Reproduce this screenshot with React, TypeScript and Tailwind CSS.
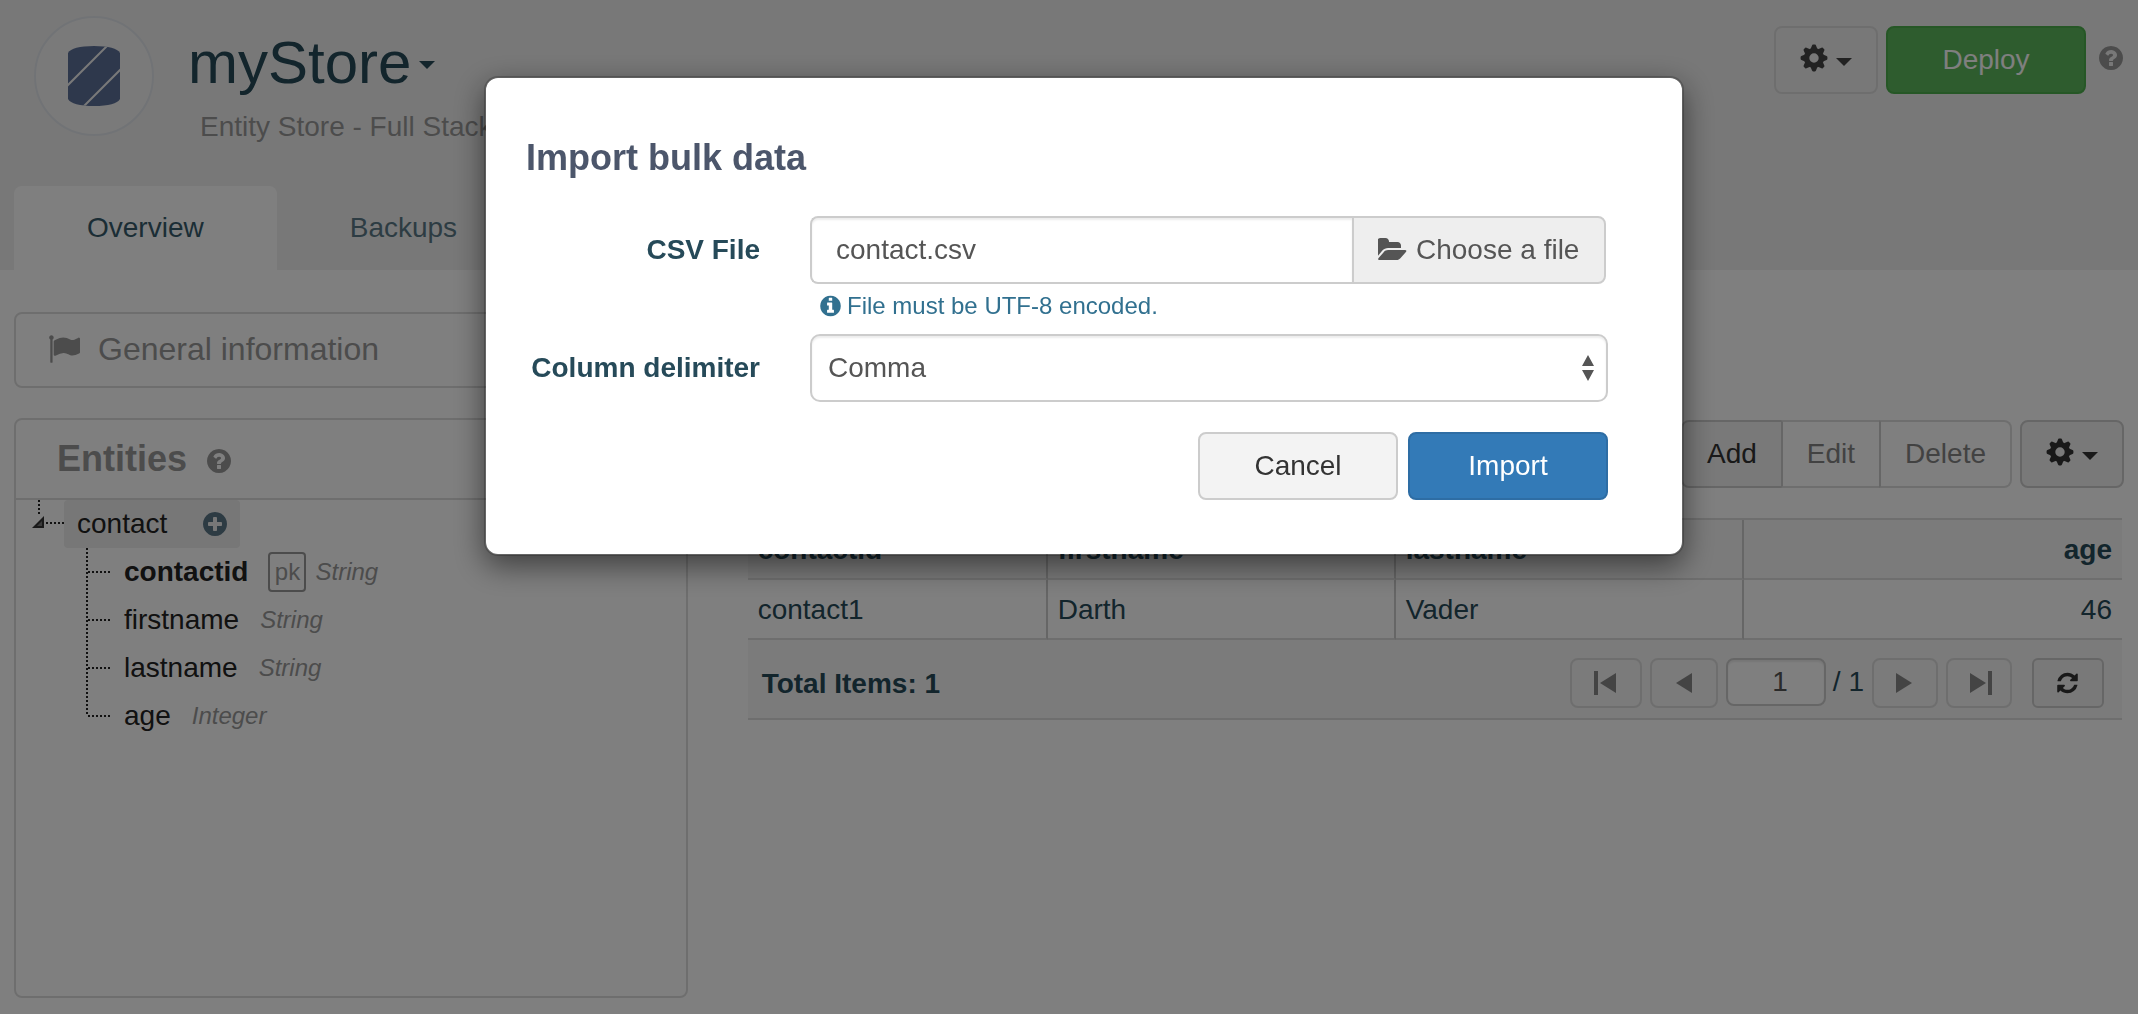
import React from "react";

const RING =
  "q0 209-103 385.5t-279.5 279.5-385.5 103-385.5-103-279.5-279.5-103-385.5 103-385.5 279.5-279.5 385.5-103 385.5 103 279.5 279.5 103 385.5z";

const ICONS = {
  refresh: {
    box: "128 0 1536 1792",
    d: "M1639 1056q0 5-1 7-64 268-268 434.5t-478 166.5q-146 0-282.5-55t-243.5-157l-129 129q-19 19-45 19t-45-19-19-45v-448q0-26 19-45t45-19h448q26 0 45 19t19 45-19 45l-137 137q71 66 161 102t187 36q134 0 250-65t186-179q11-17 53-117 8-23 30-23h192q13 0 22.5 9.5t9.5 22.5zm25-800v448q0 26-19 45t-45 19h-448q-26 0-45-19t-19-45 19-45l138-138q-148-137-349-137-134 0-250 65t-186 179q-11 17-53 117-8 23-30 23h-199q-13 0-22.5-9.5t-9.5-22.5v-7q65-268 270-434.5t480-166.5q146 0 284 55.5t245 156.5l130-129q19-19 45-19t45 19 19 45z",
  },
  question: {
    box: "128 0 1536 1792",
    d:
      "M1024 1376v-192q0-14-9-23t-23-9h-192q-14 0-23 9t-9 23v192q0 14 9 23t23 9h192q14 0 23-9t9-23zm256-672q0-88-55.5-163t-138.5-116-170-41q-243 0-371 213-15 24 8 42l132 100q7 6 19 6 16 0 25-12 53-68 86-92 34-24 86-24 48 0 85.5 26t37.5 59q0 38-20 61t-68 45q-63 28-115.5 86.5t-52.5 125.5v36q0 14 9 23t23 9h192q14 0 23-9t9-23q0-19 21.5-49.5t54.5-49.5q32-18 49-28.5t46-35 44.5-48 28-60.5 12.5-81zm384 192" +
      RING,
  },
  info: {
    box: "128 0 1536 1792",
    d:
      "M1152 1376v-160q0-14-9-23t-23-9h-96v-512q0-14-9-23t-23-9h-320q-14 0-23 9t-9 23v160q0 14 9 23t23 9h96v320h-96q-14 0-23 9t-9 23v160q0 14 9 23t23 9h448q14 0 23-9t9-23zm-128-896v-160q0-14-9-23t-23-9h-192q-14 0-23 9t-9 23v160q0 14 9 23t23 9h192q14 0 23-9t9-23zm640 416" +
      RING,
  },
  plus: {
    box: "128 0 1536 1792",
    d:
      "M1344 960v-128q0-26-19-45t-45-19h-256v-256q0-26-19-45t-45-19h-128q-26 0-45 19t-19 45v256h-256q-26 0-45 19t-19 45v128q0 26 19 45t45 19h256v256q0 26 19 45t45 19h128q26 0 45-19t19-45v-256h256q26 0 45-19t19-45zm320-64" +
      RING,
  },
  flag: {
    box: "0 0 1792 1792",
    d: "M320 256q0 72-64 110v1266q0 13-9.5 22.5t-22.5 9.5h-64q-13 0-22.5-9.5t-9.5-22.5v-1266q-64-38-64-110 0-53 37.5-90.5t90.5-37.5 90.5 37.5 37.5 90.5zm1472 64v763q0 25-12.5 38.5t-39.5 27.5q-215 116-369 116-61 0-123.5-22t-108.5-48-115.5-48-142.5-22q-192 0-464 146-17 9-33 9-26 0-45-19t-19-45v-742q0-32 31-55 21-14 79-43 236-120 421-120 107 0 200 29t219 88q38 19 88 19 54 0 117.5-21t110-47 88-47 54.5-21q26 0 45 19t19 45z",
  },
  folder: {
    box: "0 0 1856 1792",
    d: "M1815 952q0 31-31 66l-336 396q-43 51-120.5 86.5t-143.5 35.5h-1088q-34 0-60.5-13t-26.5-43q0-31 31-66l336-396q43-51 120.5-86.5t143.5-35.5h1088q34 0 60.5 13t26.5 43zm-343-344v160h-832q-94 0-197 47.5t-164 119.5l-337 396-5 6q0-4-.5-12.5t-.5-12.5v-960q0-92 66-158t158-66h320q92 0 158 66t66 158v32h544q92 0 158 66t66 158z",
  },
};

function Icon({ name, className }: { name: keyof typeof ICONS; className: string }) {
  return (
    <svg viewBox={ICONS[name].box} className={"shrink-0 fill-current " + className} aria-hidden="true">
      <path d={ICONS[name].d} />
    </svg>
  );
}

function Gear() {
  return (
    <svg viewBox="-14 -14 28 28" className="mb-1 size-7 shrink-0" aria-hidden="true">
      <circle r="7.4" fill="none" stroke="currentColor" strokeWidth="5.4" />
      {[0, 45, 90, 135, 180, 225, 270, 315].map((a) => (
        <path
          key={a}
          transform={`rotate(${a})`}
          d="M-3.4-9L-2-12.6Q-1.7-13.4-1-13.4H1Q1.7-13.4 2-12.6L3.4-9z"
          fill="currentColor"
        />
      ))}
    </svg>
  );
}

function Caret() {
  return (
    <svg viewBox="0 0 16 8" className="mt-1 h-2 w-4 shrink-0 fill-current" aria-hidden="true">
      <path d="M0 0h16L8 8z" />
    </svg>
  );
}

function StoreLogo() {
  return (
    <svg viewBox="0 0 120 120" className="size-[120px] shrink-0" aria-hidden="true">
      <circle cx="60" cy="60" r="59" fill="#f5f5f5" stroke="#e3e7ec" strokeWidth="2" />
      <clipPath id="drum">
        <path d="M34 37Q38 30 60 30T86 37V83Q82 90 60 90T34 83z" />
      </clipPath>
      <g clipPath="url(#drum)">
        <rect x="30" y="26" width="60" height="68" fill="#5d7199" />
        <path d="M28 75L77 26M44 96L92 48" stroke="#f2f2f2" strokeWidth="2" />
      </g>
    </svg>
  );
}

function Header() {
  return (
    <header className="flex flex-col bg-[#f1f1f1]">
      <div className="flex h-[186px] items-start pt-4 pl-[34px]">
        <StoreLogo />
        <div className="flex flex-col pl-[34px]">
          <button className="mt-[15px] flex items-center gap-2 text-[60px] leading-[64px] text-[#264a59]">
            <span>myStore</span>
            <Caret />
          </button>
          <p className="mt-3 ml-3 leading-10 text-[#999]">Entity Store - Full Stack</p>
        </div>
        <div className="ml-auto flex items-center pt-[10px] pr-[15px]">
          <button
            aria-label="Store settings"
            className="mr-2 flex h-[68px] w-[104px] items-center gap-2 rounded-lg border-2 border-[#ddd] px-6 text-[#444]"
          >
            <Gear />
            <Caret />
          </button>
          <button className="h-[68px] w-[200px] rounded-lg border-2 border-[#4cae4c] bg-[#5cb85c] text-white">Deploy</button>
          <a href="#help" aria-label="Help" className="ml-[13px] pb-1 text-[#999]">
            <Icon name="question" className="h-7 w-6" />
          </a>
        </div>
      </div>
      <nav className="flex h-[84px] gap-0.5 pl-[14px]">
        <a href="#overview" className="flex items-center rounded-t-lg bg-white px-[73px] text-[#365b6b]">
          Overview
        </a>
        <a href="#backups" className="flex items-center rounded-t-lg px-[71px] text-[#5b7986]">
          Backups
        </a>
      </nav>
    </header>
  );
}

const DOTS_Y = "bg-[repeating-linear-gradient(to_bottom,#222_0px,#222_2px,transparent_2px,transparent_4px)]";
const DOTS_X = "bg-[repeating-linear-gradient(to_right,#222_0px,#222_2px,transparent_2px,transparent_4px)]";

const FIELDS = [
  { name: "contactid", type: "String", pk: true },
  { name: "firstname", type: "String", pk: false },
  { name: "lastname", type: "String", pk: false },
  { name: "age", type: "Integer", pk: false },
];

function EntitiesPanel() {
  return (
    <section className="h-[580px] rounded-lg border-2 border-[#ddd]">
      <h2 className="flex h-[80px] items-center gap-5 border-b-2 border-[#ddd] pl-[41px] text-[36px] leading-10 font-bold text-[#999]">
        Entities
        <a href="#entities-help" aria-label="About entities" className="pt-1">
          <Icon name="question" className="h-7 w-6" />
        </a>
      </h2>
      <div className="flex h-12 pl-4">
        <div className="flex w-8 flex-col">
          <span className={"ml-1.5 h-4 w-0.5 " + DOTS_Y} />
          <span className="flex items-center gap-0.5">
            <svg viewBox="0 0 12 12" className="size-3" aria-hidden="true">
              <path d="M12 0v12H0z" fill="#333" />
              <path d="M10 5v5H5z" fill="#777" />
            </svg>
            <span className={"mt-0.5 h-0.5 flex-1 " + DOTS_X} />
          </span>
        </div>
        <div className="flex w-44 items-center justify-between rounded bg-[#eee] pr-[13px] pl-[13px] text-[#222]">
          contact
          <button aria-label="Add field" className="text-[#5a7687]">
            <Icon name="plus" className="h-7 w-6" />
          </button>
        </div>
      </div>
      <ul className="pl-[70px]">
        {FIELDS.map((f, i) => (
          <li key={f.name} className="flex h-12 items-center text-[#222]">
            <span className="flex h-12 w-[38px] items-center">
              <span className={"w-0.5 " + (i === FIELDS.length - 1 ? "h-6 self-start " : "h-12 ") + DOTS_Y} />
              <span className={"h-0.5 w-6 " + DOTS_X} />
            </span>
            <span className={f.pk ? "font-bold" : ""}>{f.name}</span>
            {f.pk && (
              <span className="mr-[-12px] ml-5 flex h-10 w-[38px] items-center justify-center rounded border-2 border-[#999] text-[24px] text-[#999]">
                pk
              </span>
            )}
            <em className="ml-[21px] text-[24px] text-[#999]">{f.type}</em>
          </li>
        ))}
      </ul>
    </section>
  );
}

function Toolbar() {
  return (
    <div className="flex h-[68px] justify-end gap-2">
      <div className="flex">
        <button className="rounded-l-lg border-2 border-[#ccc] bg-[#f3f3f3] px-6 text-[#333]">Add</button>
        <button disabled className="-ml-0.5 border-2 border-x-[#ccc] border-y-[#ddd] px-6 text-[#858585]">
          Edit
        </button>
        <button disabled className="-ml-0.5 rounded-r-lg border-2 border-[#ddd] border-l-[#ccc] px-6 text-[#858585]">
          Delete
        </button>
      </div>
      <button
        aria-label="Table settings"
        className="flex w-[104px] items-center gap-2 rounded-lg border-2 border-[#ccc] bg-[#f3f3f3] px-6 text-[#333]"
      >
        <Gear />
        <Caret />
      </button>
    </div>
  );
}

function PageArrow({ label, d, view, className }: { label: string; d: string; view: string; className: string }) {
  return (
    <button aria-label={label} disabled className={"flex h-[50px] items-center rounded-lg border-2 border-[#ddd] text-[#888] " + className}>
      <svg viewBox={view} className="h-6 fill-current" aria-hidden="true">
        <path d={d} />
      </svg>
    </button>
  );
}

function Pager() {
  return (
    <div className="flex items-start border-b-2 border-[#ddd] bg-[#f6f6f6] pt-[18px] pr-[18px] pb-[10px] pl-[14px] text-[#264a59]">
      <strong className="mt-1.5 mr-auto leading-10">Total Items: 1</strong>
      <div className="flex items-start gap-2">
        <PageArrow label="First page" view="0 0 22 24" d="M0 0h4v24H0zM22 2v20L6 12z" className="w-[72px] pl-[22px]" />
        <PageArrow label="Previous page" view="0 0 16 24" d="M16 2v20L0 12z" className="w-[68px] pl-6" />
        <input
          aria-label="Page"
          defaultValue="1"
          className="h-12 w-[100px] rounded-lg border-2 border-[#ccc] bg-white pr-9 text-right text-[#555] shadow-[inset_0_2px_2px_rgba(0,0,0,0.08)]"
        />
      </div>
      <span className="mt-1 mr-2 ml-[7px] leading-10">/ 1</span>
      <div className="flex items-start gap-2">
        <PageArrow label="Next page" view="0 0 16 24" d="M0 2v20L16 12z" className="w-[66px] pl-[22px]" />
        <PageArrow label="Last page" view="0 0 22 24" d="M0 2v20L16 12zM18 0h4v24h-4z" className="w-[66px] pl-[22px]" />
      </div>
      <button
        aria-label="Refresh"
        className="ml-5 flex h-[50px] w-[72px] items-center justify-center rounded-md border-2 border-[#ccc] bg-[#f3f3f3] text-[#333]"
      >
        <Icon name="refresh" className="h-6 w-[21px]" />
      </button>
    </div>
  );
}

const COLUMNS = ["contactid", "firstname", "lastname", "age"];
const ROW = ["contact1", "Darth", "Vader", "46"];
const COL_WIDTHS = ["w-[300px]", "w-[348px]", "w-[348px]", ""];

function DataTable() {
  return (
    <div className="mt-[30px] mr-0.5">
      <table className="w-full table-fixed border-separate border-spacing-0 border-t-2 border-[#ddd] leading-10 text-[#264a59]">
        <thead>
          <tr>
            {COLUMNS.map((c, i) => (
              <th
                key={c}
                scope="col"
                className={
                  "h-[60px] border-b-2 border-b-[#ddd] bg-[#f6f6f6] px-[10px] pt-0.5 font-bold " +
                  COL_WIDTHS[i] +
                  (i === 3 ? " text-right" : " border-r-2 border-r-[#ccc] text-left")
                }
              >
                {c}
              </th>
            ))}
          </tr>
        </thead>
        <tbody>
          <tr>
            {ROW.map((c, i) => (
              <td
                key={c}
                className={
                  "h-[60px] border-b-2 border-b-[#ddd] px-[10px] pt-0.5 " +
                  (i === 3 ? "text-right" : "border-r-2 border-r-[#ccc] text-left")
                }
              >
                {c}
              </td>
            ))}
          </tr>
        </tbody>
      </table>
      <Pager />
    </div>
  );
}

function ImportDialog() {
  return (
    <div className="fixed inset-0 overflow-hidden bg-black/50 pt-[76px] pl-[30px]">
      <form
        role="dialog"
        aria-labelledby="import-title"
        className="mx-auto w-full max-w-[1200px] rounded-[14px] border-2 border-black/20 bg-white bg-clip-padding pt-[60px] pr-[74px] pb-[54px] pl-10 shadow-[0_10px_30px_rgba(0,0,0,0.5)]"
        onSubmit={(e: React.FormEvent) => e.preventDefault()}
      >
        <h1 id="import-title" className="text-[36px] leading-10 font-bold text-[#4c566b]">
          Import bulk data
        </h1>
        <div className="mt-[38px] grid grid-cols-[234px_1fr] gap-x-[50px]">
          <label htmlFor="csv" className="text-right leading-[68px] font-bold text-[#264a59]">
            CSV File
          </label>
          <div className="mr-0.5 flex h-[68px] text-[#555]">
            <input
              id="csv"
              readOnly
              defaultValue="contact.csv"
              className="min-w-0 flex-1 rounded-l-lg border-2 border-r-0 border-[#ccc] bg-white px-6 shadow-[inset_0_2px_2px_rgba(0,0,0,0.075)]"
            />
            <button type="button" className="flex w-[254px] items-center gap-[9px] rounded-r-lg border-2 border-[#ccc] bg-[#eee] pl-6">
              <Icon name="folder" className="h-7 w-[29px]" />
              Choose a file
            </button>
          </div>
          <p className="col-start-2 flex h-[50px] items-center gap-1.5 pb-[7px] pl-2.5 text-[24px] text-[#31708f]">
            <Icon name="info" className="h-6 w-[21px]" />
            File must be UTF-8 encoded.
          </p>
          <label htmlFor="delimiter" className="text-right leading-[68px] font-bold text-[#264a59]">
            Column delimiter
          </label>
          <div className="relative">
            <select
              id="delimiter"
              defaultValue="Comma"
              className="h-[68px] w-full appearance-none rounded-[10px] border-2 border-[#ccc] bg-white px-4 text-[#555] shadow-[inset_0_2px_2px_rgba(0,0,0,0.075)]"
            >
              <option>Comma</option>
              <option>Semicolon</option>
              <option>Tab</option>
            </select>
            <svg viewBox="0 0 14 26" className="pointer-events-none absolute top-[21px] right-[13px] h-[26px] w-3.5 fill-[#555]" aria-hidden="true">
              <path d="M1 11L7 0l6 11zM1 15h12L7 26z" />
            </svg>
          </div>
        </div>
        <div className="mt-[30px] flex justify-end gap-2.5">
          <button type="button" className="h-[68px] w-[200px] rounded-lg border-2 border-[#ccc] bg-[#f3f3f3] text-[#333]">
            Cancel
          </button>
          <button type="submit" className="h-[68px] w-[200px] rounded-lg border-2 border-[#2e6da4] bg-[#337ab7] text-white">
            Import
          </button>
        </div>
      </form>
    </div>
  );
}

export default function App() {
  return (
    <div className="min-h-screen bg-white font-['Liberation_Sans',Arial,sans-serif] text-[28px] leading-10">
      <Header />
      <main className="pt-[42px]">
        <div className="w-1/3 pr-[25px] pl-[14px]">
          <section className="flex h-[76px] items-center gap-[18px] rounded-lg border-2 border-[#ddd] pb-0.5 pl-8 text-[32px] text-[#999]">
            <Icon name="flag" className="size-8" />
            <h2>General information</h2>
          </section>
        </div>
        <div className="mt-[30px] flex">
          <div className="w-1/3 pr-[25px] pl-[14px]">
            <EntitiesPanel />
          </div>
          <div className="w-2/3 pt-0.5 pr-[14px] pl-[35px]">
            <Toolbar />
            <DataTable />
          </div>
        </div>
      </main>
      <ImportDialog />
    </div>
  );
}
